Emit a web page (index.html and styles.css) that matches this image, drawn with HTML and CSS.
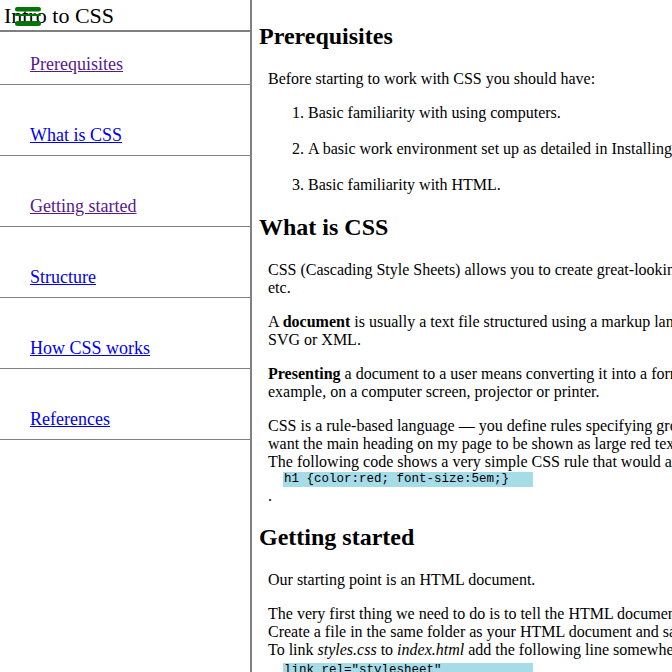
FILE: index.html
```html
<!DOCTYPE html>
<html>
<head>
<meta charset="utf-8">
<title>Intro to CSS</title>
<link rel="stylesheet" href="styles.css">
</head>
<body>
<div class="layout">
  <aside class="sidebar">
    <header class="site-header">
      <span class="site-title">Intro to CSS</span>
      <svg class="menu-icon" width="26" height="21" viewBox="0 0 26 21" aria-hidden="true">
        <rect x="0" y="1" width="26" height="4.5" rx="2.2" fill="#067306"/>
        <rect x="0" y="8" width="26" height="2" rx="1" fill="#067306"/>
        <rect x="0" y="15" width="26" height="5" rx="2.5" fill="#067306"/>
      </svg>
    </header>
    <nav>
      <ul class="nav-list">
        <li class="nav-item first"><a class="visited" href="#prerequisites">Prerequisites</a></li>
        <li class="nav-item"><a href="#what">What is CSS</a></li>
        <li class="nav-item"><a class="visited" href="#getting-started">Getting started</a></li>
        <li class="nav-item"><a href="#structure">Structure</a></li>
        <li class="nav-item"><a href="#how">How CSS works</a></li>
        <li class="nav-item"><a href="#references">References</a></li>
      </ul>
    </nav>
  </aside>
  <main class="content">
    <section id="prerequisites">
      <h2 class="section-title">Prerequisites</h2>
      <div class="section-body">
        <p>Before starting to work with CSS you should have:</p>
        <ol class="steps">
          <li>Basic familiarity with using computers.</li>
          <li>A basic work environment set up as detailed in Installing basic software, and an understanding of how to create and manage files.</li>
          <li>Basic familiarity with HTML.</li>
        </ol>
      </div>
    </section>
    <section id="what">
      <h2 class="section-title">What is CSS</h2>
      <div class="section-body">
        <p>CSS (Cascading Style Sheets) allows you to create great-looking web pages — it specifies how documents are presented to users, how they are styled, laid out,<br>etc.</p>
        <p>A <b>document</b> is usually a text file structured using a markup language — HTML is the most common markup language, but you may also come across others such as<br>SVG or XML.</p>
        <p><b>Presenting</b> a document to a user means converting it into a form usable by your audience. Browsers, like Firefox, Chrome or Edge, present documents visually, for<br>example, on a computer screen, projector or printer.</p>
        <p>CSS is a rule-based language — you define rules specifying groups of styles that should be applied to particular elements or groups of elements on your web page. I<br>want the main heading on my page to be shown as large red text.<br>The following code shows a very simple CSS rule that would achieve the styling described above:<code class="code-block">h1 {color:red; font-size:5em;}</code>.</p>
      </div>
    </section>
    <section id="getting-started">
      <h2 class="section-title">Getting started</h2>
      <div class="section-body">
        <p>Our starting point is an HTML document.</p>
        <p>The very first thing we need to do is to tell the HTML document that we have some CSS rules we want it to use.<br>Create a file in the same folder as your HTML document and save it as <i>styles.css</i>.<br>To link <i>styles.css</i> to <i>index.html</i> add the following line somewhere inside the head of the HTML document:<code class="code-block second">link rel="stylesheet"
  href="styles.css"</code></p>
      </div>
    </section>
  </main>
</div>
</body>
</html>
```
FILE: styles.css
```css
html, body {
  margin: 0;
  padding: 0;
  height: 100%;
  overflow: hidden;
  background: #fff;
}

body {
  font-family: "Liberation Serif", "Times New Roman", serif;
  font-size: 16px;
  color: #000;
}

.layout {
  display: flex;
  height: 672px;
  width: 672px;
  overflow: hidden;
}

.sidebar {
  flex: 0 0 250px;
  width: 250px;
  border-right: 2px solid #808080;
}

.site-header {
  position: relative;
  box-sizing: border-box;
  height: 32px;
  padding: 3px 0 0 4px;
  border-bottom: 2px solid #808080;
}

.site-title {
  font-size: 22px;
  line-height: 26px;
}

.menu-icon {
  position: absolute;
  left: 15px;
  top: 6px;
}

.nav-list {
  list-style: none;
  margin: 0;
  padding: 0;
}

.nav-item {
  padding: 40px 0 10px 30px;
  border-bottom: 1px solid #808080;
  font-size: 18px;
  line-height: 20px;
}

.nav-item.first {
  padding-top: 22px;
}

.nav-item a {
  color: #0000ee;
  text-decoration: underline;
}

.nav-item a.visited {
  color: #551a8b;
}

.content {
  flex: 1 1 auto;
  min-width: 0;
  overflow: hidden;
  padding: 3px 0 0 7px;
}

.section-title {
  font-size: 24px;
  font-weight: bold;
  line-height: 28px;
  margin: 19px 0 20px;
  white-space: nowrap;
}

#getting-started .section-title {
  margin-top: 18px;
}

.section-body {
  margin-left: 9px;
}

.section-body p {
  margin: 16px 0;
  line-height: 18px;
  white-space: nowrap;
}

.section-title + .section-body > p:first-child {
  margin-top: 0;
}

.steps {
  margin: 16px 0;
  padding-left: 40px;
  line-height: 18px;
  white-space: nowrap;
}

.steps li + li {
  margin-top: 18px;
}

.code-block {
  display: block;
  width: 250px;
  margin: 1px 0 0 15px;
  background: #a6dbe8;
  font-family: "Liberation Mono", "Courier New", monospace;
  font-size: 12.5px;
  line-height: 15px;
  padding-left: 1px;
  box-sizing: border-box;
  white-space: pre;
}

.code-block.second {
  margin-top: 4px;
}
```
